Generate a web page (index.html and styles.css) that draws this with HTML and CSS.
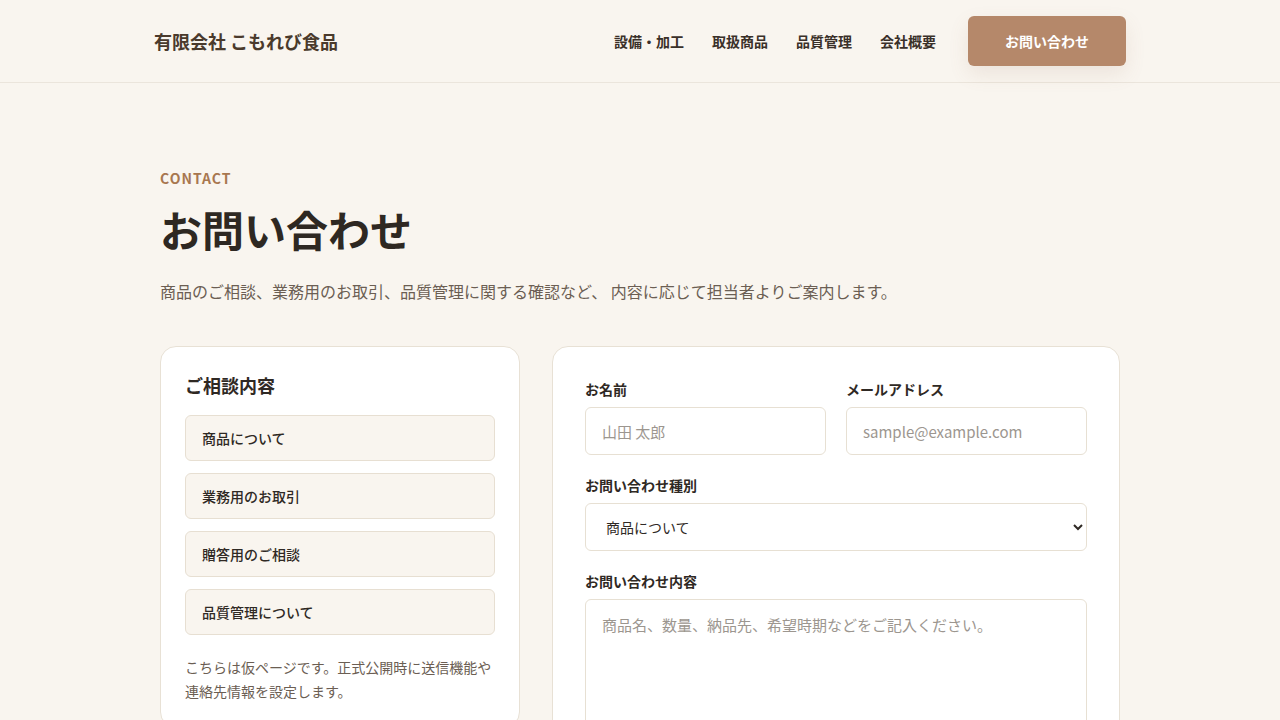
FILE: index.html
```html
<!DOCTYPE html>
<html lang="ja">
<head>
    <meta charset="UTF-8">
    <meta name="viewport" content="width=device-width, initial-scale=1.0">
    <title>お問い合わせ | 有限会社 こもれび食品</title>
    <link rel="stylesheet" href="styles.css">
</head>
<body>
    <header class="site-header">
        <div class="header-inner">
            <a class="logo" href="#">有限会社 こもれび食品</a>
            <nav class="nav">
                <a href="#">設備・加工</a>
                <a href="#">取扱商品</a>
                <a href="#">品質管理</a>
                <a href="#">会社概要</a>
                <a class="nav-cta" href="#">お問い合わせ</a>
            </nav>
        </div>
    </header>

    <main class="contact">
        <p class="eyebrow">CONTACT</p>
        <h1>お問い合わせ</h1>
        <p class="lead">商品のご相談、業務用のお取引、品質管理に関する確認など、 内容に応じて担当者よりご案内します。</p>

        <div class="contact-grid">
            <aside class="card side">
                <h2>ご相談内容</h2>
                <ul class="topics">
                    <li>商品について</li>
                    <li>業務用のお取引</li>
                    <li>贈答用のご相談</li>
                    <li>品質管理について</li>
                </ul>
                <p class="note">こちらは仮ページです。正式公開時に送信機能や連絡先情報を設定します。</p>
            </aside>

            <form class="card form">
                <div class="row">
                    <div class="field">
                        <label for="name">お名前</label>
                        <input type="text" id="name" placeholder="山田 太郎">
                    </div>
                    <div class="field">
                        <label for="email">メールアドレス</label>
                        <input type="email" id="email" placeholder="sample@example.com">
                    </div>
                </div>
                <div class="field">
                    <label for="kind">お問い合わせ種別</label>
                    <select id="kind">
                        <option>商品について</option>
                        <option>業務用のお取引</option>
                        <option>贈答用のご相談</option>
                        <option>品質管理について</option>
                    </select>
                </div>
                <div class="field">
                    <label for="message">お問い合わせ内容</label>
                    <textarea id="message" rows="8" placeholder="商品名、数量、納品先、希望時期などをご記入ください。"></textarea>
                </div>
            </form>
        </div>
    </main>
</body>
</html>
```

FILE: styles.css
```css
* {
    box-sizing: border-box;
}
body {
    margin: 0;
    font-family: "Noto Sans CJK JP", "Noto Sans", sans-serif;
    background-color: #f9f5ef;
    color: #2f2924;
}
a {
    text-decoration: none;
    color: inherit;
}
.site-header {
    border-bottom: 1px solid #ebe5dc;
}
.header-inner {
    max-width: 972px;
    margin: 0 auto;
    height: 82px;
    display: flex;
    align-items: center;
    justify-content: space-between;
}
.logo {
    font-size: 18px;
    font-weight: 700;
    color: #4a3a2c;
}
.nav {
    display: flex;
    align-items: center;
    gap: 28px;
    font-size: 14px;
    font-weight: 700;
    color: #3a3029;
}
.nav-cta {
    margin-left: 4px;
    width: 158px;
    height: 50px;
    display: flex;
    align-items: center;
    justify-content: center;
    background-color: #b5886a;
    color: #fff;
    border-radius: 6px;
    box-shadow: 0 8px 20px rgba(150, 110, 80, 0.12);
}
.contact {
    max-width: 960px;
    margin: 0 auto;
    padding-top: 85px;
}
.eyebrow {
    margin: 0;
    font-size: 14px;
    line-height: 20px;
    font-weight: 700;
    letter-spacing: 1px;
    color: #a8774f;
}
h1 {
    margin: 10px 0 0;
    font-size: 42px;
    line-height: 62px;
    font-weight: 700;
    color: #2e2822;
}
.lead {
    margin: 20px 0 0;
    font-size: 16px;
    line-height: 22px;
    color: #6b5e53;
}
.contact-grid {
    margin-top: 44px;
    display: grid;
    grid-template-columns: 360px 1fr;
    gap: 32px;
    align-items: start;
}
.card {
    background-color: #fff;
    border: 1px solid #e8e1d5;
    border-radius: 16px;
}
.side {
    padding: 24px 24px 24px;
}
.side h2 {
    margin: 0;
    font-size: 18px;
    line-height: 28px;
    font-weight: 700;
    color: #2f2924;
}
.topics {
    list-style: none;
    margin: 16px 0 0;
    padding: 0;
    display: flex;
    flex-direction: column;
    gap: 12px;
}
.topics li {
    height: 46px;
    display: flex;
    align-items: center;
    padding: 0 16px;
    background-color: #f9f5ef;
    border: 1px solid #e7dfd2;
    border-radius: 6px;
    font-size: 14px;
    font-weight: 500;
    color: #2f2924;
}
.note {
    margin: 20px 0 0;
    font-size: 14px;
    line-height: 24px;
    color: #6b5e53;
}
.form {
    padding: 32px;
    display: flex;
    flex-direction: column;
    gap: 20px;
}
.row {
    display: grid;
    grid-template-columns: 1fr 1fr;
    gap: 20px;
}
.field label {
    display: block;
    font-size: 14px;
    line-height: 20px;
    font-weight: 700;
    color: #2f2924;
    margin-bottom: 8px;
}
input,
select,
textarea {
    width: 100%;
    font-family: inherit;
    font-size: 15px;
    color: #2f2924;
    background-color: #fff;
    border: 1px solid #e7e0d3;
    border-radius: 6px;
}
input,
select {
    height: 48px;
    padding: 0 16px;
}
select {
    font-size: 14px;
}
textarea {
    padding: 14px 16px;
    resize: vertical;
    height: 180px;
}
::placeholder {
    color: #9c968f;
}
```
